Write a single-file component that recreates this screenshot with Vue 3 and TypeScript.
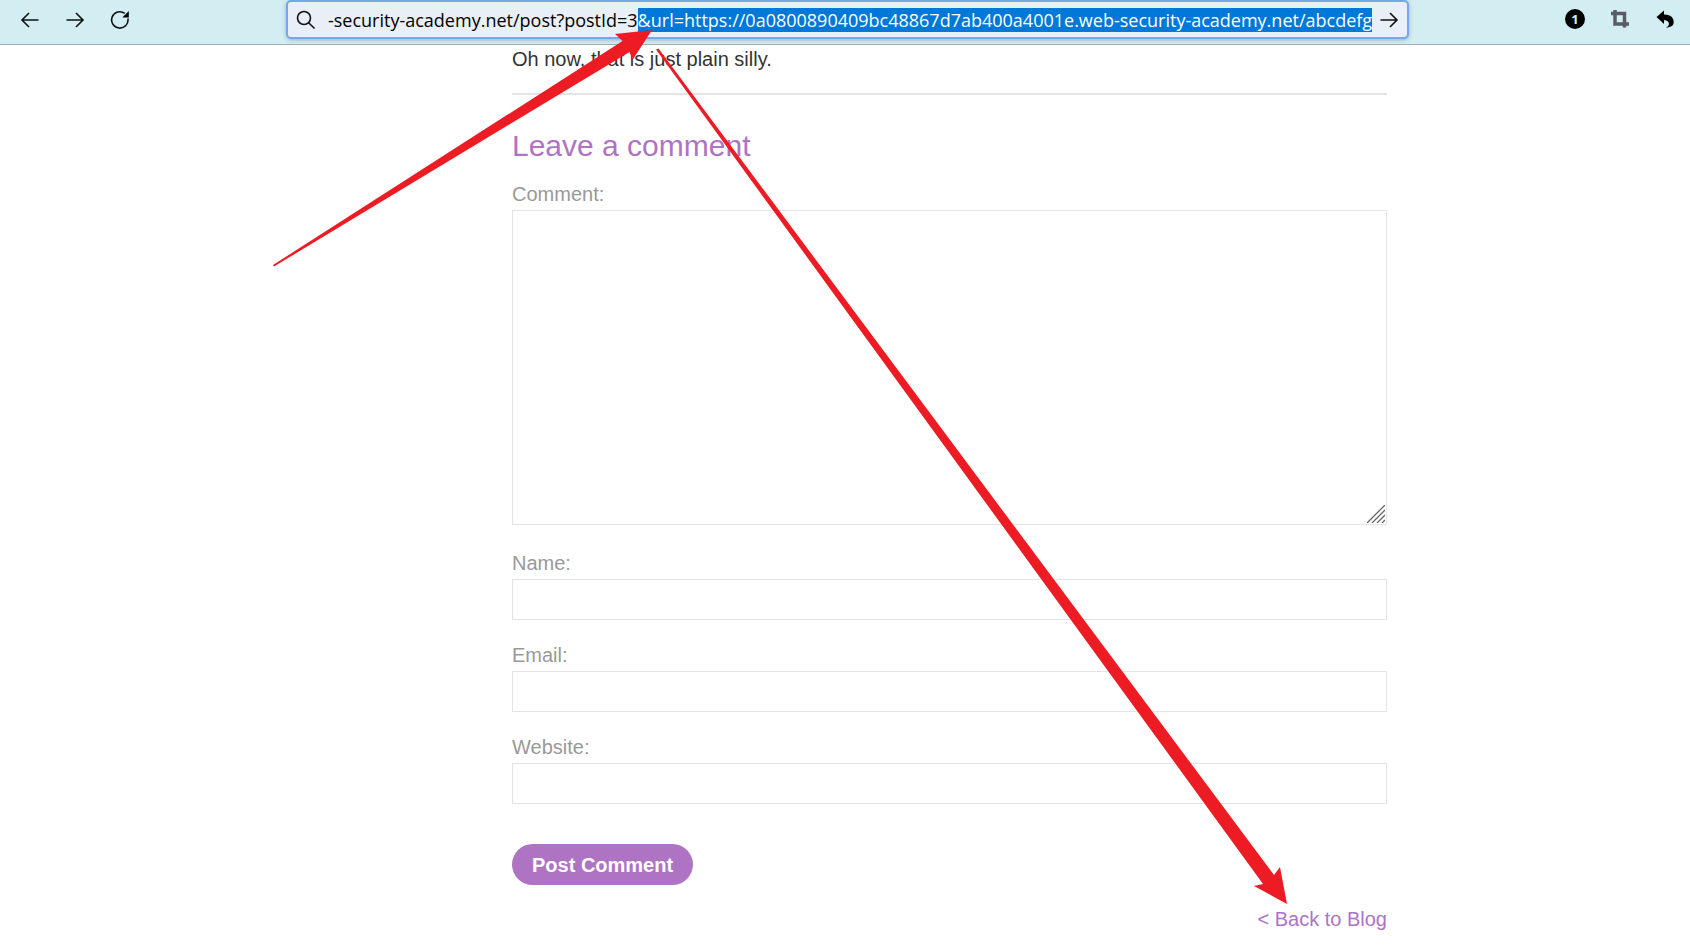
<script setup lang="ts">
import { onMounted, ref } from 'vue'

interface Field {
  id: string
  label: string
  type: string
}

const fields: Field[] = [
  { id: 'name', label: 'Name:', type: 'text' },
  { id: 'email', label: 'Email:', type: 'email' },
  { id: 'website', label: 'Website:', type: 'text' },
]

const host = 'https://0a0800890409bc48867d7ab400a4001e.web-security-academy.net'
const base = `${host}/post?postId=3`
const url = ref(`${base}&url=${host}/abcdefg`)
const address = ref<HTMLInputElement | null>(null)

onMounted(() => {
  const el = address.value
  if (!el) return
  el.focus()
  el.setSelectionRange(base.length, url.value.length)
  el.scrollLeft = el.scrollWidth
})
</script>

<template>
  <div class="page">
    <header class="toolbar">
      <nav class="nav">
        <button type="button" aria-label="Back">
          <svg width="20" height="20" viewBox="0 0 20 20"><path d="M18.5 10H2M9 3L2 10l7 7" /></svg>
        </button>
        <button type="button" aria-label="Forward">
          <svg width="20" height="20" viewBox="0 0 20 20"><path d="M1.500 10H18M11 3l7 7-7 7" /></svg>
        </button>
        <button type="button" aria-label="Reload">
          <svg width="20" height="20" viewBox="0 0 20 20">
            <path d="M17.900 8.500A8.200 8.200 0 1 1 14.800 3.400" />
            <path class="solid" d="M18.800 1v6.500h-6.500z" />
          </svg>
        </button>
      </nav>
      <form class="address" @submit.prevent>
        <svg class="lens" width="20" height="20" viewBox="0 0 20 20">
          <circle cx="8" cy="8" r="6.500" /><path d="M12.700 12.700L18.500 18.500" />
        </svg>
        <input ref="address" v-model="url" type="text" aria-label="Address" spellcheck="false" />
        <button type="submit" aria-label="Go">
          <svg width="20" height="20" viewBox="0 0 20 20"><path d="M1.500 10H18M11 3l7 7-7 7" /></svg>
        </button>
      </form>
      <div class="tools">
        <button type="button" class="count" aria-label="Notifications">1</button>
        <button type="button" aria-label="Crop">
          <svg width="20" height="20" viewBox="0 0 20 20">
            <path class="crop" d="M1 4.500H14.500V18.500M5 1V15H19" />
          </svg>
        </button>
        <button type="button" aria-label="Undo">
          <svg width="20" height="20" viewBox="0 0 20 20">
            <path class="solid" d="M1.500 8L9 1.500V5.500C15.500 5.500 18.700 8.500 18.700 13C18.700 16.500 16.500 18.300 11 18.600C15 17 15.500 11.500 9 11V15z" />
          </svg>
        </button>
      </div>
    </header>

    <main class="content">
      <div class="post">
        <p class="text">Oh now, that is just plain silly.</p>
        <hr />
        <h2>Leave a comment</h2>
        <form @submit.prevent>
          <div class="field">
            <label for="comment">Comment:</label>
            <div class="area">
              <textarea id="comment"></textarea>
              <svg class="grip" width="18" height="18" viewBox="0 0 18 18">
                <path d="M0 18L18 0M5 18L18 5M10 18L18 10M15 18L18 15" />
              </svg>
            </div>
          </div>
          <div v-for="f in fields" :key="f.id" class="field">
            <label :for="f.id">{{ f.label }}</label>
            <input :id="f.id" :type="f.type" />
          </div>
          <button class="submit" type="submit">Post Comment</button>
        </form>
        <div class="back"><a href="#">&lt; Back to Blog</a></div>
      </div>
    </main>

    <svg class="arrows" viewBox="0 0 1690 950" aria-hidden="true">
      <path d="M273 265L622.500 41L615 34L652 30L632.500 60L629.500 52L274 266.500z" />
      <path d="M656 49.500L658.500 48.500L1274 875L1280 867L1287 904L1254 886L1263 884z" />
    </svg>
  </div>
</template>

<style>
body {
  margin: 0;
  background: #fff;
}
</style>

<style scoped>
.page {
  position: relative;
  min-height: 100vh;
  overflow: hidden;
  font-family: "Liberation Sans", Arial, sans-serif;
  font-size: 20px;
  line-height: 24px;
  color: #333332;
}
.toolbar {
  display: grid;
  grid-template-columns: 286fr 1123fr 281fr;
  align-items: start;
  height: 44px;
  background: #d2eef2;
  border-bottom: 1px solid #9eb0b3;
}
.toolbar button {
  display: grid;
  place-items: center;
  width: 20px;
  height: 20px;
  padding: 0;
  border: 0;
  background: none;
}
.toolbar svg {
  display: block;
  fill: none;
  stroke: #111;
  stroke-width: 1.6;
}
.toolbar .solid {
  fill: #000;
  stroke: none;
}
.toolbar .crop {
  stroke: #5b5b66;
  stroke-width: 3.5;
}
.nav {
  display: flex;
  gap: 25px;
  padding: 10px 20px;
}
.address {
  display: flex;
  align-items: center;
  box-sizing: border-box;
  height: 39px;
  min-width: 0;
  padding: 0 8px;
  border: 2px solid #74a7ec;
  border-radius: 5px;
  background: #e9eff6;
  box-shadow: 0 1px 4px rgba(0, 0, 0, 0.25);
}
.address input {
  flex: 1;
  min-width: 0;
  height: 24px;
  margin: 0 7px 0 12px;
  padding: 0;
  border: 0;
  outline: 0;
  background: none;
  font-family: "Open Sans", "Noto Sans", sans-serif;
  font-size: 18px;
  line-height: 22px;
  color: #000;
}
.address input::selection {
  background: #0078d7;
  color: #fff;
}
.tools {
  display: flex;
  justify-content: flex-end;
  gap: 25px;
  padding: 9px 15px;
}
.toolbar .count {
  border-radius: 50%;
  background: #000;
  color: #d2eef2;
  font: bold 13px/20px "Open Sans", sans-serif;
}
.content {
  display: grid;
  grid-template-columns: 512fr 875fr 303fr;
}
.post {
  grid-column: 2;
  padding-top: 2px;
}
.text {
  margin: 0;
}
hr {
  height: 2px;
  margin: 22px 0 33px;
  border: 0;
  background: #e4e4e4;
}
h2 {
  margin: 0 0 20px;
  font-size: 30px;
  line-height: 36px;
  font-weight: 400;
  color: #ae74c3;
}
.field {
  margin-bottom: 25px;
}
label {
  display: block;
  margin-bottom: 6px;
  line-height: 20px;
  color: #999;
}
.field input,
textarea {
  display: block;
  box-sizing: border-box;
  width: 100%;
  height: 41px;
  padding: 8px;
  border: 1px solid #e4e4e4;
  border-radius: 0;
  outline: 0;
  background: #fff;
  font: inherit;
}
textarea {
  height: 315px;
  resize: none;
}
.area {
  position: relative;
  margin-bottom: 28px;
}
.grip {
  position: absolute;
  right: 2px;
  bottom: 2px;
  fill: none;
  stroke: #666;
  stroke-width: 1.3;
  pointer-events: none;
}
.submit {
  display: block;
  height: 41px;
  margin: 40px 0 22px;
  padding: 0 20px;
  border: 0;
  border-radius: 21px;
  background: #ae74c3;
  color: #fff;
  font: bold 20px/24px "Liberation Sans", Arial, sans-serif;
}
.back {
  text-align: right;
}
.back a {
  color: #ae74c3;
  text-decoration: none;
}
.arrows {
  position: absolute;
  top: 0;
  left: 0;
  width: 100%;
  fill: #ed1c24;
  pointer-events: none;
}
</style>
